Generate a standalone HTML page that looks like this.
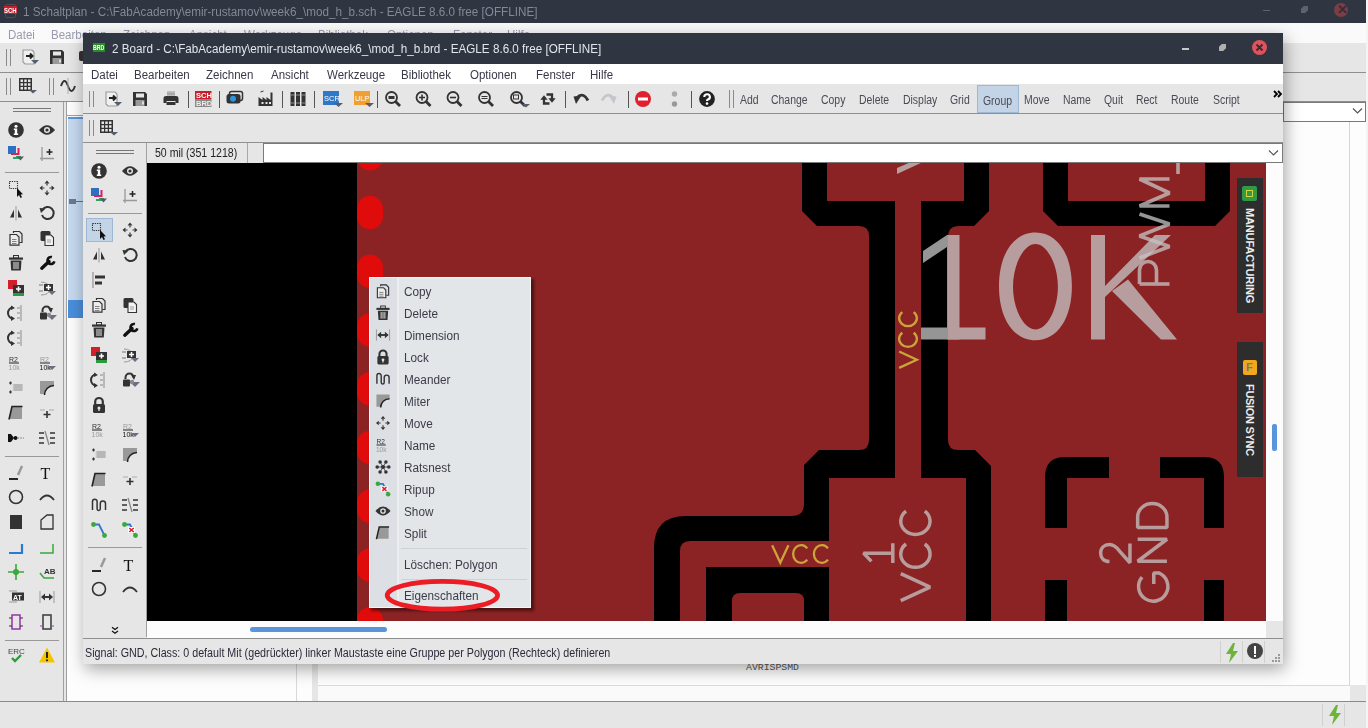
<!DOCTYPE html>
<html><head><meta charset="utf-8">
<style>
*{box-sizing:border-box;margin:0;padding:0}
html,body{width:1368px;height:728px;overflow:hidden;background:#e6e6e6;font-family:"Liberation Sans",sans-serif;font-size:12px;color:#1e1e1e;position:relative}
.a{position:absolute}
.t{position:absolute;white-space:nowrap;line-height:1;transform-origin:0 0}
.dk{background:#2f3541}
.hl{position:absolute;height:1px;background:#9a9a9a}
.vl{position:absolute;width:1px;background:#9a9a9a}
svg{position:absolute;overflow:visible}
.bm{color:#8e8e98}
.mb .t{font-size:12px;color:#39394a;transform:scaleX(.96)}
.tb .t{font-size:12px;color:#4a4a55;transform:scaleX(.87)}
.cm .t{font-size:12px;color:#3b3b48;transform:scaleX(.98)}
</style></head><body>

<!-- ============ BACKGROUND WINDOW (Schaltplan) ============ -->
<div class="a" style="left:0;top:0;width:1366px;height:728px;background:#e6e6e6"></div>
<div class="a" style="left:1366px;top:0;width:2px;height:728px;background:#f4f4f4"></div>
<div class="a dk" style="left:0;top:0;width:1366px;height:23px"></div>
<div class="a" style="left:5px;top:4px;width:11px;height:14px;border:1px solid #4a4f5a;border-radius:2px"></div><div class="a" style="left:4px;top:6px;width:13px;height:8px;background:#c8202c"></div>
<div class="t" style="left:4px;top:7px;font-size:7px;color:#fff;font-weight:bold;transform:scaleX(.85)">SCH</div>
<div class="t" style="left:23px;top:6px;font-size:12.5px;color:#828a96;transform:scaleX(.935)">1 Schaltplan - C:\FabAcademy\emir-rustamov\week6_\mod_h_b.sch - EAGLE 8.6.0 free [OFFLINE]</div>
<div class="a" style="left:1263px;top:10px;width:7px;height:1px;background:#5d626b"></div>
<div class="a" style="left:1301px;top:6px;width:7px;height:7px;background:#5d626b;clip-path:polygon(0 40%,40% 0,100% 0,100% 60%,60% 100%,0 100%)"></div>
<div class="a" style="left:1334px;top:3px;width:14px;height:14px;border-radius:50%;background:#7a3e48"></div>
<div class="t" style="left:1337px;top:3px;font-size:13px;color:#3a2b33;font-weight:bold">✕</div>

<div class="a" style="left:0;top:23px;width:1366px;height:20px;background:#fafafa"></div>
<div class="mb">
<div class="t" style="left:8px;top:29px;color:#9a9ab0">Datei</div>
<div class="t" style="left:51px;top:29px;color:#9a9ab0">Bearbeiten</div>
<div class="t" style="left:123px;top:29px;color:#9a9ab0">Zeichnen</div><div class="t" style="left:189px;top:29px;color:#9a9ab0">Ansicht</div><div class="t" style="left:244px;top:29px;color:#9a9ab0">Werkzeuge</div><div class="t" style="left:318px;top:29px;color:#9a9ab0">Bibliothek</div><div class="t" style="left:387px;top:29px;color:#9a9ab0">Optionen</div><div class="t" style="left:453px;top:29px;color:#9a9ab0">Fenster</div><div class="t" style="left:507px;top:29px;color:#9a9ab0">Hilfe</div>
</div>
<div class="a" style="left:0;top:43px;width:1366px;height:29px;background:#e6e6e6"></div>
<div class="a" style="left:79px;top:51px;width:6px;height:10px;background:#333;border-radius:2px 0 0 2px"></div>
<div class="hl" style="left:0;top:72px;width:1366px;background:#8f8f8f"></div>
<div class="hl" style="left:0;top:101px;width:1366px;background:#8f8f8f"></div>
<!-- bg left panel -->
<div class="vl" style="left:63px;top:102px;height:600px;background:#a0a0a0"></div>
<div class="vl" style="left:66px;top:102px;height:600px;background:#a0a0a0"></div>
<!-- bg canvas -->
<div class="a" style="left:67px;top:102px;width:1283px;height:583px;background:#fdfdfd"></div>
<div class="a" style="left:66px;top:115px;width:20px;height:1px;background:#a0a0a0"></div><div class="a" style="left:68px;top:117px;width:20px;height:201px;background:#c6d9ef;border-top:2px solid #5b97db"></div>
<div class="a" style="left:68px;top:300px;width:20px;height:18px;background:#4a8fdc"></div>
<div class="a" style="left:69px;top:199px;width:7px;height:5px;background:#6a7a90"></div><div class="a" style="left:76px;top:201px;width:7px;height:1px;background:#2a9a5a"></div>
<div class="vl" style="left:1349px;top:121px;height:564px;background:#d6d6dc"></div>
<div class="a" style="left:1350px;top:121px;width:16px;height:564px;background:#fdfdfd"></div>
<div class="a" style="left:1283px;top:102px;width:83px;height:20px;background:#fff;border:1px solid #7a7a7a"></div>
<svg style="left:1352px;top:107px" width="11" height="8"><path d="M1 1.5 L5.5 6 L10 1.5" fill="none" stroke="#555" stroke-width="1.2"/></svg>
<div class="a" style="left:67px;top:685px;width:251px;height:16px;background:#fdfdfd"></div>
<div class="a" style="left:318px;top:685px;width:1032px;height:16px;background:#fafafa;border-top:1px solid #dadae0"></div>
<div class="a" style="left:1350px;top:685px;width:16px;height:16px;background:#e6e6e6"></div>
<div class="vl" style="left:296px;top:663px;height:38px;background:#d8d8de"></div>
<div class="a" style="left:312px;top:663px;width:6px;height:38px;background:#e6e6e6"></div>
<div class="hl" style="left:0;top:701px;width:1366px;background:#8a8a8a"></div>
<div class="vl" style="left:1322px;top:704px;height:22px;background:#d0d0d0"></div>
<div class="vl" style="left:1344px;top:704px;height:22px;background:#d0d0d0"></div>
<svg style="left:1327px;top:705px" width="16" height="20"><path d="M9 0 L2 11 L7 11 L5 20 L14 8 L9 8 L11 0Z" fill="#6fb43a"/></svg>

<div class="t" style="left:746px;top:663px;font-family:'Liberation Mono',monospace;font-size:9.8px;color:#555">AVRISPSMD</div>
<!-- ============ BOARD WINDOW ============ -->
<div class="a" style="left:83px;top:33px;width:1200px;height:631px;background:#e6e6e6;box-shadow:2px 5px 16px rgba(0,0,0,0.36)"></div>
<div class="a dk" style="left:83px;top:33px;width:1200px;height:31px"></div>
<div class="a" style="left:93px;top:43px;width:12px;height:9px;background:#2a8a2a"></div>
<div class="t" style="left:93px;top:44px;font-size:7px;color:#fff;font-weight:bold;transform:scaleX(.75)">BRD</div>
<div class="t" style="left:112px;top:43px;font-size:12.5px;color:#e2e6ec;transform:scaleX(.934)">2 Board - C:\FabAcademy\emir-rustamov\week6_\mod_h_b.brd - EAGLE 8.6.0 free [OFFLINE]</div>
<div class="a" style="left:1182px;top:48px;width:7px;height:2px;background:#c8c8c8"></div>
<div class="a" style="left:1219px;top:44px;width:7px;height:7px;background:#b0b0b0;clip-path:polygon(0 40%,40% 0,100% 0,100% 60%,60% 100%,0 100%)"></div>
<div class="a" style="left:1252px;top:40px;width:15px;height:15px;border-radius:50%;background:#e0535c"></div>
<svg style="left:1252px;top:40px" width="15" height="15"><path d="M4.5 4.5 L10.5 10.5 M10.5 4.5 L4.5 10.5" stroke="#3a2e36" stroke-width="2"/></svg>

<div class="a" style="left:83px;top:64px;width:1200px;height:20px;background:#fff"></div>
<div class="mb">
<div class="t" style="left:91px;top:69px">Datei</div>
<div class="t" style="left:134px;top:69px">Bearbeiten</div>
<div class="t" style="left:206px;top:69px">Zeichnen</div>
<div class="t" style="left:271px;top:69px">Ansicht</div>
<div class="t" style="left:327px;top:69px">Werkzeuge</div>
<div class="t" style="left:401px;top:69px">Bibliothek</div>
<div class="t" style="left:470px;top:69px">Optionen</div>
<div class="t" style="left:536px;top:69px">Fenster</div>
<div class="t" style="left:590px;top:69px">Hilfe</div>
</div>
<div class="hl" style="left:83px;top:113px;width:1200px;background:#8f8f8f"></div>
<div class="hl" style="left:83px;top:142px;width:1200px;background:#8f8f8f"></div>
<div class="a" style="left:977px;top:85px;width:42px;height:28px;background:#c3d4e6;border:1px solid #9db8d4"></div>
<div class="tb">
<div class="t" style="left:740px;top:94px">Add</div>
<div class="t" style="left:771px;top:94px">Change</div>
<div class="t" style="left:821px;top:94px">Copy</div>
<div class="t" style="left:859px;top:94px">Delete</div>
<div class="t" style="left:903px;top:94px">Display</div>
<div class="t" style="left:950px;top:94px">Grid</div>
<div class="t" style="left:983px;top:95px">Group</div>
<div class="t" style="left:1024px;top:94px">Move</div>
<div class="t" style="left:1063px;top:94px">Name</div>
<div class="t" style="left:1104px;top:94px">Quit</div>
<div class="t" style="left:1136px;top:94px">Rect</div>
<div class="t" style="left:1171px;top:94px">Route</div>
<div class="t" style="left:1213px;top:94px">Script</div>
</div>
<svg style="left:1273px;top:90px" width="10" height="8"><path d="M1 1 L4 4 L1 7 M5 1 L8 4 L5 7" fill="none" stroke="#000" stroke-width="1.8"/></svg>

<!-- left tool panel -->
<div class="vl" style="left:146px;top:143px;height:494px;background:#a0a0a0"></div>
<!-- coord bar -->
<div class="t" style="left:155px;top:147px;font-size:12px;color:#222;transform:scaleX(.88)">50 mil (351 1218)</div>
<div class="vl" style="left:247px;top:143px;height:20px;background:#a8a8a8"></div>
<div class="a" style="left:263px;top:143px;width:1020px;height:20px;background:#fff;border:1px solid #7a7a7a"></div>
<svg style="left:1268px;top:149px" width="11" height="8"><path d="M1 1.5 L5.5 6 L10 1.5" fill="none" stroke="#555" stroke-width="1.2"/></svg>

<!-- canvas placeholder -->
<div class="a" style="left:147px;top:163px;width:1119px;height:458px;background:#8b2324"></div>
<div class="a" style="left:1266px;top:163px;width:17px;height:458px;background:#fcfcfc"></div>
<div class="a" style="left:1272px;top:424px;width:5px;height:27px;background:#5a95dc;border-radius:2px"></div>
<div class="a" style="left:147px;top:621px;width:1119px;height:17px;background:#fcfcfc"></div>
<div class="a" style="left:250px;top:627px;width:137px;height:5px;background:#5a95dc;border-radius:2.5px"></div>
<div class="a" style="left:1266px;top:621px;width:17px;height:17px;background:#e6e6e6"></div>
<div class="hl" style="left:83px;top:638px;width:1200px;background:#8f8f8f"></div>
<div class="t" style="left:85px;top:646.5px;font-size:12px;color:#2a2a3a;transform:scaleX(.893)">Signal: GND, Class: 0 default Mit (gedrückter) linker Maustaste eine Gruppe per Polygon (Rechteck) definieren</div>
<div class="vl" style="left:1220px;top:641px;height:22px;background:#d0d0d0"></div>
<div class="vl" style="left:1242px;top:641px;height:22px;background:#d0d0d0"></div>
<div class="vl" style="left:1264px;top:641px;height:22px;background:#d0d0d0"></div>
<svg style="left:1224px;top:643px" width="16" height="20"><path d="M9 0 L2 11 L7 11 L5 20 L14 8 L9 8 L11 0Z" fill="#6fb43a"/></svg>
<div class="a" style="left:1247px;top:643px;width:16px;height:16px;border-radius:50%;background:#444"></div>
<div class="a" style="left:1254px;top:646px;width:2px;height:8px;background:#fff"></div>
<div class="a" style="left:1254px;top:655px;width:2px;height:2px;background:#fff"></div>

<svg style="left:1270px;top:652px" width="12" height="12"><g fill="#9a9a9a"><rect x="8" y="2" width="2" height="2"/><rect x="5" y="5" width="2" height="2"/><rect x="8" y="5" width="2" height="2"/><rect x="2" y="8" width="2" height="2"/><rect x="5" y="8" width="2" height="2"/><rect x="8" y="8" width="2" height="2"/></g></svg>
<!--CANVAS START-->
<svg style="left:147px;top:163px" width="1119" height="458" viewBox="147 163 1119 458">
<defs><clipPath id="cc"><rect x="147" y="163" width="1119" height="458"/></clipPath></defs>
<g clip-path="url(#cc)">
<rect x="147" y="163" width="1119" height="458" fill="#8b2324"/>
<rect x="147" y="163" width="210" height="458" fill="#000"/>
<g fill="#e00b0b">
<rect x="357" y="137" width="26" height="33.5" rx="13" ry="13"/>
<rect x="357" y="195.7" width="26" height="33.5" rx="13" ry="13"/>
<rect x="357" y="254.5" width="26" height="33.5" rx="13" ry="13"/>
<rect x="357" y="313.2" width="26" height="33.5" rx="13" ry="13"/>
<rect x="357" y="372" width="26" height="33.5" rx="13" ry="13"/>
<rect x="357" y="430.7" width="26" height="33.5" rx="13" ry="13"/>
<rect x="357" y="489.5" width="26" height="33.5" rx="13" ry="13"/>
<rect x="357" y="548.2" width="26" height="33.5" rx="13" ry="13"/>
<rect x="357" y="607" width="26" height="33.5" rx="13" ry="13"/>
</g>
<path fill="#000" d="M802 160 L802 211 L817 226 L859 226 Q869 226 869 236 L869 440 Q869 450 859 450 L819 450 L804 465 L804 504 Q804 516 792 516 L686 516 Q654 516 654 548 L654 625 L1270 625 L1270 160 Z"/>
<g fill="#8b2324">
<rect x="827" y="160" width="137" height="41"/>
<rect x="1068" y="160" width="137" height="41"/>
<rect x="895" y="195" width="26" height="290"/>
<rect x="829" y="478" width="137" height="147"/>
<path d="M680 625 L680 551 Q680 541 690 541 L835 541 L835 567 L706 567 L706 625 Z"/>
<path d="M732 625 L732 601 Q732 593 740 593 L796 593 Q804 593 804 601 L804 625 Z"/>
<path d="M948 237 Q948 226 959 226 L974 226 L989 211 L989 160 L1043 160 L1043 211 L1058 226 L1215 226 L1230 211 L1230 160 L1270 160 L1270 625 L991 625 L991 466 L975 450 L958 450 Q948 450 948 440 Z"/>
</g>
<g fill="#000">
<path d="M1045 528 L1045 477 Q1045 457 1065 457 L1109 457 L1109 478 L1067 478 L1067 528 Z"/>
<path d="M1160 457 L1204 457 Q1224 457 1224 477 L1224 528 L1204 528 L1204 478 L1160 478 Z"/>
<rect x="1045" y="580" width="22" height="45"/>
<rect x="1204" y="580" width="20" height="45"/>
</g>
<g opacity="0.76" fill="#c6c4c4"><path d="M897 168 L911 162 L923 162 L897 174 Z"/></g>
<g opacity="0.76" fill="#c6c4c4">
<rect x="947" y="235" width="12.5" height="104.5"/>
<path d="M923 251 L947 235 L953 235 L953 243 L923 263 Z"/>
<rect x="921" y="327.5" width="64.5" height="12"/>
<path fill-rule="evenodd" d="M999 286.35 C999 253.98 1013.58 232.4 1035.45 232.4 C1057.32 232.4 1071.9 253.98 1071.9 286.35 C1071.9 318.72 1057.32 340.3 1035.45 340.3 C1013.58 340.3 999 318.72 999 286.35 Z M1013 286.8 C1013 264.54 1023.78 244 1035.45 244 C1047.12 244 1057.9 264.54 1057.9 286.8 C1057.9 309.06 1047.12 329.6 1035.45 329.6 C1023.78 329.6 1013 309.06 1013 286.8 Z"/>
<rect x="1091" y="235" width="14" height="104.5"/>
<path d="M1155 235 L1171 235 L1105 297 L1105 286 Z"/>
<path d="M1128 279.5 L1177 339.5 L1161 339.5 L1112 291 Z"/>
</g>
<g opacity="0.76" fill="none" stroke="#c6c4c4" stroke-width="3.6" stroke-linejoin="bevel">
<path d="M1139.5 284 L1169.5 284"/>
<path d="M1139.5 284 L1139.5 270 A8.5 8.5 0 0 1 1156.5 270 L1156.5 284"/>
<path d="M1139.5 258 L1169.5 246.5 L1139.5 236 L1169.5 224 L1139.5 214"/>
<path d="M1169.5 206 L1139.5 206 L1169.5 193 L1139.5 179 L1169.5 179"/>
<path d="M1178 163 L1178 174"/>
</g>
<g opacity="0.76" fill="none" stroke="#c6c4c4" stroke-width="3.5" stroke-linejoin="bevel">
<path transform="translate(900.75 600.6) rotate(-90)" d="M 0 0 L 13.48 29.3 L 26.96 0 M 56.6 5.27 A 13.19 14.65 0 1 0 56.6 24.03 M 89.47 5.27 A 13.19 14.65 0 1 0 89.47 24.03"/>
<path transform="translate(863.5 563.1) rotate(-90)" d="M 1.76 7.91 L 9.96 0 L 9.96 29.3 M 0 29.3 L 19.92 29.3"/>
<path transform="translate(1137.65 602.25) rotate(-90)" d="M 25.2 4.39 A 14.65 14.65 0 1 0 29.3 21.1 L 29.3 16.12 L 18.17 16.12 M 41 29.3 L 41 0 L 62.98 29.3 L 62.98 0 M 74.67 0 L 74.67 29.3 L 85.22 29.3 A 13.48 14.65 0 0 0 85.22 0 Z"/>
<path transform="translate(1100.65 562.75) rotate(-90)" d="M 1.17 8.79 C 1.17 2.93 5.27 0 9.67 0 C 14.65 0 18.17 3.52 18.17 8.79 C 18.17 13.77 14.65 16.7 11.13 19.34 L 0 29.3 L 19.34 29.3"/>
</g>
<g fill="none" stroke="#c9a53a" stroke-width="2.3">
<path transform="translate(899.15 367.85) rotate(-90)" d="M 0 0 L 8.14 17.7 L 16.28 0 M 35.07 3.19 A 7.96 8.85 0 1 0 35.07 14.51 M 55.8 3.19 A 7.96 8.85 0 1 0 55.8 14.51"/>
<path transform="translate(772.15 545.15)" d="M 0 0 L 8.14 17.7 L 16.28 0 M 35.07 3.19 A 7.96 8.85 0 1 0 35.07 14.51 M 55.8 3.19 A 7.96 8.85 0 1 0 55.8 14.51"/>
</g>
</g>
</svg>
<div class="a" style="left:1237px;top:178px;width:26px;height:135px;background:#2d2d2d"></div>
<div class="a" style="left:1242px;top:186px;width:15px;height:15px;background:#2f9a48;border-radius:2px"></div>
<div class="a" style="left:1246px;top:190px;width:7px;height:7px;border:1.5px solid #d8d23a"></div>
<div class="t" style="left:1255px;top:208px;font-size:11px;font-weight:bold;color:#ececec;letter-spacing:-0.15px;transform:rotate(90deg)">MANUFACTURING</div>
<div class="a" style="left:1237px;top:342px;width:26px;height:135px;background:#2d2d2d"></div>
<div class="a" style="left:1243px;top:360px;width:14px;height:15px;background:#f0a81e;border-radius:2px"></div>
<div class="t" style="left:1246px;top:362px;font-size:11px;font-weight:bold;color:#777">F</div>
<div class="t" style="left:1255px;top:383.5px;font-size:11px;font-weight:bold;color:#ececec;letter-spacing:-0.3px;transform:rotate(90deg)">FUSION SYNC</div>

<!--CANVAS END-->
<!--MENU START-->
<div class="a" style="left:371px;top:279px;width:163px;height:332px;background:rgba(0,0,0,0.45);filter:blur(1.5px)"></div>
<div class="a" style="left:369px;top:277px;width:162px;height:331px;background:#e3e6e9;border:1px solid #f4f5f6"></div>
<div class="a" style="left:370px;top:278px;width:27px;height:329px;background:#dcdfe3"></div>
<div class="a" style="left:397px;top:278px;width:2px;height:329px;background:#eceef0"></div>
<div class="hl" style="left:401px;top:548px;width:126px;background:#cfd1d4"></div>
<div class="hl" style="left:401px;top:579px;width:126px;background:#cfd1d4"></div>
<div class="cm">
<div class="t" style="left:404px;top:286px">Copy</div>
<div class="t" style="left:404px;top:308px">Delete</div>
<div class="t" style="left:404px;top:330px">Dimension</div>
<div class="t" style="left:404px;top:352px">Lock</div>
<div class="t" style="left:404px;top:374px">Meander</div>
<div class="t" style="left:404px;top:396px">Miter</div>
<div class="t" style="left:404px;top:418px">Move</div>
<div class="t" style="left:404px;top:440px">Name</div>
<div class="t" style="left:404px;top:462px">Ratsnest</div>
<div class="t" style="left:404px;top:484px">Ripup</div>
<div class="t" style="left:404px;top:506px">Show</div>
<div class="t" style="left:404px;top:528px">Split</div>
<div class="t" style="left:404px;top:559px">Löschen: Polygon</div>
<div class="t" style="left:404px;top:590px">Eigenschaften</div>
</div>
<svg style="left:0;top:0" width="1368" height="728">
<ellipse cx="442.4" cy="595.3" rx="55.2" ry="13.9" fill="none" stroke="#ec1c24" stroke-width="4.8"/>
</svg>

<!--MENU END-->
<!--ICONS START-->
<svg style="left:0;top:0" width="1368" height="728"><rect x="86.5" y="218.5" width="26" height="23" fill="#c3d4e6" stroke="#9db8d4" stroke-width="1"/><rect x="89" y="91" width="1" height="16" fill="#8a8a8a"/><rect x="93" y="91" width="1" height="16" fill="#8a8a8a"/><rect x="188" y="91" width="1" height="17" fill="#555"/><rect x="219" y="91" width="1" height="17" fill="#555"/><rect x="282" y="91" width="1" height="17" fill="#555"/><rect x="314" y="91" width="1" height="17" fill="#555"/><rect x="377" y="91" width="1" height="17" fill="#555"/><rect x="565" y="91" width="1" height="17" fill="#555"/><rect x="628" y="91" width="1" height="17" fill="#555"/><rect x="691" y="91" width="1" height="17" fill="#555"/><rect x="729" y="90" width="1" height="18" fill="#8a8a8a"/><rect x="733" y="90" width="1" height="18" fill="#8a8a8a"/><rect x="89" y="120" width="1" height="16" fill="#8a8a8a"/><rect x="93" y="120" width="1" height="16" fill="#8a8a8a"/><rect x="6" y="49" width="1" height="17" fill="#8a8a8a"/><rect x="10" y="49" width="1" height="17" fill="#8a8a8a"/><rect x="6" y="78" width="1" height="17" fill="#8a8a8a"/><rect x="10" y="78" width="1" height="17" fill="#8a8a8a"/><rect x="49" y="78" width="1" height="17" fill="#8a8a8a"/><rect x="53" y="78" width="1" height="17" fill="#8a8a8a"/><rect x="96" y="150" width="38" height="1" fill="#777"/><rect x="96" y="153" width="38" height="1" fill="#777"/><rect x="13" y="108" width="38" height="1" fill="#777"/><rect x="13" y="111" width="38" height="1" fill="#777"/><rect x="88" y="213" width="54" height="1" fill="#999"/><rect x="88" y="547" width="54" height="1" fill="#999"/><rect x="5" y="172" width="54" height="1" fill="#999"/><rect x="5" y="456" width="54" height="1" fill="#999"/><rect x="5" y="640" width="54" height="1" fill="#999"/>
<g transform="translate(91.0 163.0)"><circle cx="8" cy="8" r="7.8" fill="#333"/><circle cx="8" cy="4.2" r="1.5" fill="#fff"/><path d="M5.8 6.6 H9.2 V11.6 H10.2 V13 H5.8 V11.6 H6.8 V8 H5.8Z" fill="#fff"/></g>
<g transform="translate(122.0 163.0)"><path d="M0 8 Q8 -1.5 16 8 Q8 17.5 0 8Z" fill="#333"/><circle cx="8" cy="8" r="3" fill="#e6e6e6"/><circle cx="8" cy="8" r="1.6" fill="#333"/></g>
<g transform="translate(91.0 188.0)"><rect x="0" y="0" width="8" height="8" fill="#2f6fc2"/><path d="M9.5 2 H11.5 V9 H3 V7 H9.5Z" fill="#d92060"/><path d="M8 10 H13 V13 H5 V11 H8Z" fill="#2aa55a"/><path d="M9 10.5 H16 L12.5 14.5Z" fill="#555a66"/></g>
<g transform="translate(122.0 188.0)"><path d="M3 1 V15 M1 12.5 H15" stroke="#999" stroke-width="1.3" fill="none"/><path d="M10.5 3 V9 M7.5 6 H13.5" stroke="#222" stroke-width="1.5"/></g>
<g transform="translate(91.0 222.0)"><rect x="1.5" y="1.5" width="8" height="7" fill="none" stroke="#333" stroke-width="1.1" stroke-dasharray="1.3 1"/><path d="M9 8 L9 17 L11 15 L12.5 18 L14 17.3 L12.6 14.5 L15 14.2Z" fill="#111"/></g>
<g transform="translate(122.0 222.0)"><path d="M8 0.5 L10.5 3.5 H5.5Z M8 15.5 L10.5 12.5 H5.5Z M0.5 8 L3.5 5.5 V10.5Z M15.5 8 L12.5 5.5 V10.5Z" fill="#333"/><path d="M8 3.5 V5.5 M8 10.5 V12.5 M3.5 8 H5.5 M10.5 8 H12.5" stroke="#333" stroke-width="1.2"/></g>
<g transform="translate(91.0 247.0)"><path d="M8 1 V15.5" stroke="#aaa" stroke-width="1.3"/><path d="M6 4.5 L2 12.5 H6Z" fill="#333"/><path d="M10 4.5 L14 12.5 H10Z" fill="#333"/></g>
<g transform="translate(122.0 247.0)"><path d="M3.5 5 A6 6 0 1 1 3 10" fill="none" stroke="#333" stroke-width="2"/><path d="M0.5 3 L6.5 3.5 L2 8Z" fill="#333"/></g>
<g transform="translate(91.0 272.0)"><path d="M2 0 V16" stroke="#999" stroke-width="1.3"/><rect x="4" y="3.5" width="10" height="3" fill="#333"/><rect x="4" y="9.5" width="7" height="3" fill="#333"/></g>
<g transform="translate(91.0 297.0)"><path d="M5.5 3 V1.5 H11.5 L14 4 V12.5 H11.5" fill="none" stroke="#333" stroke-width="1.2"/><path d="M2 4.5 H8.5 L11 7 V15.2 H2Z" fill="#ececec" stroke="#333" stroke-width="1.2"/><path d="M4 9.5 H8.5 M4 11.5 H8.5 M4 13.5 H8.5" stroke="#777" stroke-width="0.9"/></g>
<g transform="translate(122.0 297.0)"><rect x="1.5" y="1" width="10" height="10" rx="1.5" fill="#333"/><path d="M6 5 H12 L14.5 7.5 V15.5 H6Z" fill="#f2f2f2" stroke="#333" stroke-width="1.1"/><path d="M8 10 H12 M8 12 H12" stroke="#888" stroke-width="0.8"/></g>
<g transform="translate(91.0 322.0)"><rect x="1" y="2.5" width="14" height="2.2" fill="#333"/><rect x="5.5" y="0.5" width="5" height="2.5" fill="none" stroke="#333" stroke-width="1"/><path d="M2.5 5.5 H13.5 L12.8 15.5 H3.2Z" fill="#333"/><path d="M6 7 V14 M8 7 V14 M10 7 V14" stroke="#e6e6e6" stroke-width="1"/></g>
<g transform="translate(122.0 322.0)"><path d="M2.8 13.2 L10 6.5" stroke="#111" stroke-width="3.4" stroke-linecap="round"/><path d="M13.24 0.86 A4.8 4.8 0 1 0 16.64 6.74 L14.1 6.07 A2.2 2.2 0 1 1 12.57 3.37 Z" fill="#111"/></g>
<g transform="translate(91.0 347.0)"><rect x="0" y="0" width="9" height="9" fill="#d21f2b"/><rect x="5" y="5" width="11" height="8" fill="#333"/><rect x="5" y="13" width="11" height="3" fill="#2a9a3e"/><path d="M10.5 6.5 V11.5 M8 9 H13" stroke="#fff" stroke-width="1.6"/></g>
<g transform="translate(122.0 347.0)"><path d="M2 2 Q10 2 11 9 Q10 15 2 15" fill="none" stroke="#999" stroke-width="1"/><path d="M0 5 H4 M0 11 H4" stroke="#777" stroke-width="1"/><rect x="5" y="4" width="9" height="7" fill="#333"/><path d="M9.5 5 V10 M7 7.5 H12" stroke="#fff" stroke-width="1.5"/><path d="M9 11 H17 L13 15Z" fill="#6a7080"/></g>
<g transform="translate(91.0 372.0)"><path d="M5 2.5 A5 5.5 0 0 0 5 13.5" fill="none" stroke="#333" stroke-width="2"/><path d="M3 0.5 L7 3 L3 5Z M3 11 L7 13.5 L3 16Z" fill="#333"/><path d="M13 0 V16" stroke="#aaa" stroke-width="1.5"/><path d="M9 3 H12 M9 8 H12 M9 13 H12" stroke="#888" stroke-width="1"/></g>
<g transform="translate(122.0 372.0)"><path d="M3.5 7 V5.5 A4 4 0 0 1 11.5 5.5" fill="none" stroke="#333" stroke-width="2"/><path d="M9 3 L14 3 L12 8Z" fill="#333"/><rect x="1" y="7.5" width="7" height="7" rx="1" fill="#333"/><path d="M8 10 H18 L13 15Z" fill="#6a7080"/><circle cx="10" cy="10" r="2.2" fill="#888"/></g>
<g transform="translate(91.0 397.0)"><path d="M4.2 7 V4.8 A3.8 3.8 0 0 1 11.8 4.8 V7" fill="none" stroke="#333" stroke-width="2.2"/><rect x="2" y="7" width="12" height="9" rx="1.5" fill="#333"/><circle cx="8" cy="11" r="1.5" fill="#e6e6e6"/><rect x="7.4" y="11" width="1.2" height="3" fill="#e6e6e6"/></g>
<g transform="translate(91.0 422.0)"><text x="1" y="6.5" font-size="7" font-family="Liberation Sans" fill="#333">R2</text><path d="M1 8 H11" stroke="#444" stroke-width="1.2"/><text x="0.5" y="15" font-size="7" font-family="Liberation Sans" fill="#999">10k</text></g>
<g transform="translate(122.0 422.0)"><text x="1" y="6.5" font-size="7" font-family="Liberation Sans" fill="#999">R2</text><path d="M1 8 H11" stroke="#444" stroke-width="1.2"/><text x="0.5" y="15" font-size="7" font-family="Liberation Sans" fill="#111">10k</text><path d="M9 11 H17 L13 15Z" fill="#6a7080"/></g>
<g transform="translate(91.0 447.0)"><path d="M1 3 H4 M2.5 1.5 V4.5 M1 12 H4 M2.5 10.5 V13.5" stroke="#333" stroke-width="1.2"/><rect x="5.5" y="4" width="9" height="7" fill="#aaa"/><path d="M5 4 V11 M7 4 V11 M9 4 V11 M11 4 V11 M13 4 V11" stroke="#ccc" stroke-width="0.8"/></g>
<g transform="translate(122.0 447.0)"><path d="M1 1 H15 V5 A9 9 0 0 0 6 14 H1Z" fill="#999"/><path d="M15 5.5 A9.5 9.5 0 0 0 5.5 15" fill="none" stroke="#222" stroke-width="1.6"/></g>
<g transform="translate(91.0 472.0)"><path d="M4 2 H14 V14 H1Z" fill="#999"/><path d="M1 14.5 L4 1.5 L14.5 1.5" fill="none" stroke="#222" stroke-width="1.6"/></g>
<g transform="translate(122.0 472.0)"><path d="M1 5 H6 M10 5 H15" stroke="#aaa" stroke-width="1"/><path d="M8 6 V13 M4.5 9.5 H11.5" stroke="#333" stroke-width="1.6"/></g>
<g transform="translate(91.0 497.0)"><path d="M1.5 13 V6.5 A2.6 2.6 0 0 1 6.7 6.5 V11.8 A1.6 1.6 0 0 0 9.9 11.8 V4.5 A2.3 2.3 0 0 1 14.5 4.5 V13" fill="none" stroke="#333" stroke-width="1.5" transform="translate(16 0) scale(-1 1)"/></g>
<g transform="translate(122.0 497.0)"><path d="M0 3 H5 M0 8 H5 M0 13 H5 M11 3 H16 M11 8 H16 M11 13 H16" stroke="#333" stroke-width="1.4"/><path d="M6 1 L10 15" stroke="#888" stroke-width="1.3"/></g>
<g transform="translate(91.0 522.0)"><path d="M2.5 2.5 H8 L13.5 13.5" fill="none" stroke="#2f78d0" stroke-width="1.8"/><circle cx="2.5" cy="2.5" r="2.4" fill="#3aa83a"/><circle cx="13.5" cy="13.5" r="2.4" fill="#3aa83a"/></g>
<g transform="translate(122.0 522.0)"><path d="M2.5 2.5 H8 L13.5 13.5" fill="none" stroke="#2f78d0" stroke-width="1.8"/><circle cx="2.5" cy="2.5" r="2.4" fill="#3aa83a"/><circle cx="13.5" cy="13.5" r="2.4" fill="#3aa83a"/><rect x="6" y="5" width="7" height="6" fill="#fff"/><path d="M7.3 6 L11.7 10 M11.7 6 L7.3 10" stroke="#e0202a" stroke-width="1.6"/></g>
<g transform="translate(91.0 556.0)"><path d="M1 15 H10" stroke="#111" stroke-width="1.8"/><path d="M10 11 L14 2" stroke="#999" stroke-width="2.5"/></g>
<g transform="translate(122.0 556.0)"><text x="1.5" y="15" font-size="16" font-family="Liberation Serif" fill="#111">T</text></g>
<g transform="translate(91.0 581.0)"><circle cx="8" cy="8" r="6.5" fill="none" stroke="#333" stroke-width="1.6"/></g>
<g transform="translate(122.0 581.0)"><path d="M1 11 Q8 2 15 11" fill="none" stroke="#333" stroke-width="1.8"/></g>
<g transform="translate(109.0 625.0) scale(0.7500)"><path d="M4 3 L8 6 L12 3 M4 8 L8 11 L12 8" fill="none" stroke="#111" stroke-width="1.6"/></g>
<g transform="translate(8.0 122.0)"><circle cx="8" cy="8" r="7.8" fill="#333"/><circle cx="8" cy="4.2" r="1.5" fill="#fff"/><path d="M5.8 6.6 H9.2 V11.6 H10.2 V13 H5.8 V11.6 H6.8 V8 H5.8Z" fill="#fff"/></g>
<g transform="translate(39.0 122.0)"><path d="M0 8 Q8 -1.5 16 8 Q8 17.5 0 8Z" fill="#333"/><circle cx="8" cy="8" r="3" fill="#e6e6e6"/><circle cx="8" cy="8" r="1.6" fill="#333"/></g>
<g transform="translate(8.0 146.0)"><rect x="0" y="0" width="8" height="8" fill="#2f6fc2"/><path d="M9.5 2 H11.5 V9 H3 V7 H9.5Z" fill="#d92060"/><path d="M8 10 H13 V13 H5 V11 H8Z" fill="#2aa55a"/><path d="M9 10.5 H16 L12.5 14.5Z" fill="#555a66"/></g>
<g transform="translate(39.0 146.0)"><path d="M3 1 V15 M1 12.5 H15" stroke="#999" stroke-width="1.3" fill="none"/><path d="M10.5 3 V9 M7.5 6 H13.5" stroke="#222" stroke-width="1.5"/></g>
<g transform="translate(8.0 180.0)"><rect x="1.5" y="1.5" width="8" height="7" fill="none" stroke="#333" stroke-width="1.1" stroke-dasharray="1.3 1"/><path d="M9 8 L9 17 L11 15 L12.5 18 L14 17.3 L12.6 14.5 L15 14.2Z" fill="#111"/></g>
<g transform="translate(39.0 180.0)"><path d="M8 0.5 L10.5 3.5 H5.5Z M8 15.5 L10.5 12.5 H5.5Z M0.5 8 L3.5 5.5 V10.5Z M15.5 8 L12.5 5.5 V10.5Z" fill="#333"/><path d="M8 3.5 V5.5 M8 10.5 V12.5 M3.5 8 H5.5 M10.5 8 H12.5" stroke="#333" stroke-width="1.2"/></g>
<g transform="translate(8.0 205.0)"><path d="M8 1 V15.5" stroke="#aaa" stroke-width="1.3"/><path d="M6 4.5 L2 12.5 H6Z" fill="#333"/><path d="M10 4.5 L14 12.5 H10Z" fill="#333"/></g>
<g transform="translate(39.0 205.0)"><path d="M3.5 5 A6 6 0 1 1 3 10" fill="none" stroke="#333" stroke-width="2"/><path d="M0.5 3 L6.5 3.5 L2 8Z" fill="#333"/></g>
<g transform="translate(8.0 230.0)"><path d="M5.5 3 V1.5 H11.5 L14 4 V12.5 H11.5" fill="none" stroke="#333" stroke-width="1.2"/><path d="M2 4.5 H8.5 L11 7 V15.2 H2Z" fill="#ececec" stroke="#333" stroke-width="1.2"/><path d="M4 9.5 H8.5 M4 11.5 H8.5 M4 13.5 H8.5" stroke="#777" stroke-width="0.9"/></g>
<g transform="translate(39.0 230.0)"><rect x="1.5" y="1" width="10" height="10" rx="1.5" fill="#333"/><path d="M6 5 H12 L14.5 7.5 V15.5 H6Z" fill="#f2f2f2" stroke="#333" stroke-width="1.1"/><path d="M8 10 H12 M8 12 H12" stroke="#888" stroke-width="0.8"/></g>
<g transform="translate(8.0 255.0)"><rect x="1" y="2.5" width="14" height="2.2" fill="#333"/><rect x="5.5" y="0.5" width="5" height="2.5" fill="none" stroke="#333" stroke-width="1"/><path d="M2.5 5.5 H13.5 L12.8 15.5 H3.2Z" fill="#333"/><path d="M6 7 V14 M8 7 V14 M10 7 V14" stroke="#e6e6e6" stroke-width="1"/></g>
<g transform="translate(39.0 255.0)"><path d="M2.8 13.2 L10 6.5" stroke="#111" stroke-width="3.4" stroke-linecap="round"/><path d="M13.24 0.86 A4.8 4.8 0 1 0 16.64 6.74 L14.1 6.07 A2.2 2.2 0 1 1 12.57 3.37 Z" fill="#111"/></g>
<g transform="translate(8.0 280.0)"><rect x="0" y="0" width="9" height="9" fill="#d21f2b"/><rect x="5" y="5" width="11" height="8" fill="#333"/><rect x="5" y="13" width="11" height="3" fill="#2a9a3e"/><path d="M10.5 6.5 V11.5 M8 9 H13" stroke="#fff" stroke-width="1.6"/></g>
<g transform="translate(39.0 280.0)"><path d="M2 2 Q10 2 11 9 Q10 15 2 15" fill="none" stroke="#999" stroke-width="1"/><path d="M0 5 H4 M0 11 H4" stroke="#777" stroke-width="1"/><rect x="5" y="4" width="9" height="7" fill="#333"/><path d="M9.5 5 V10 M7 7.5 H12" stroke="#fff" stroke-width="1.5"/><path d="M9 11 H17 L13 15Z" fill="#6a7080"/></g>
<g transform="translate(8.0 305.0)"><path d="M5 2.5 A5 5.5 0 0 0 5 13.5" fill="none" stroke="#333" stroke-width="2"/><path d="M3 0.5 L7 3 L3 5Z M3 11 L7 13.5 L3 16Z" fill="#333"/><path d="M13 0 V16" stroke="#aaa" stroke-width="1.5"/><path d="M9 3 H12 M9 8 H12 M9 13 H12" stroke="#888" stroke-width="1"/></g>
<g transform="translate(39.0 305.0)"><path d="M3.5 7 V5.5 A4 4 0 0 1 11.5 5.5" fill="none" stroke="#333" stroke-width="2"/><path d="M9 3 L14 3 L12 8Z" fill="#333"/><rect x="1" y="7.5" width="7" height="7" rx="1" fill="#333"/><path d="M8 10 H18 L13 15Z" fill="#6a7080"/><circle cx="10" cy="10" r="2.2" fill="#888"/></g>
<g transform="translate(8.0 330.0)"><path d="M5 2.5 A5 5.5 0 0 0 5 13.5" fill="none" stroke="#333" stroke-width="2"/><path d="M3 0.5 L7 3 L3 5Z M3 11 L7 13.5 L3 16Z" fill="#333"/><path d="M13 0 V16" stroke="#aaa" stroke-width="1.5"/><path d="M9 3 H12 M9 8 H12 M9 13 H12" stroke="#888" stroke-width="1"/></g>
<g transform="translate(8.0 355.0)"><text x="1" y="6.5" font-size="7" font-family="Liberation Sans" fill="#333">R2</text><path d="M1 8 H11" stroke="#444" stroke-width="1.2"/><text x="0.5" y="15" font-size="7" font-family="Liberation Sans" fill="#999">10k</text></g>
<g transform="translate(39.0 355.0)"><text x="1" y="6.5" font-size="7" font-family="Liberation Sans" fill="#999">R2</text><path d="M1 8 H11" stroke="#444" stroke-width="1.2"/><text x="0.5" y="15" font-size="7" font-family="Liberation Sans" fill="#111">10k</text><path d="M9 11 H17 L13 15Z" fill="#6a7080"/></g>
<g transform="translate(8.0 380.0)"><path d="M1 3 H4 M2.5 1.5 V4.5 M1 12 H4 M2.5 10.5 V13.5" stroke="#333" stroke-width="1.2"/><rect x="5.5" y="4" width="9" height="7" fill="#aaa"/><path d="M5 4 V11 M7 4 V11 M9 4 V11 M11 4 V11 M13 4 V11" stroke="#ccc" stroke-width="0.8"/></g>
<g transform="translate(39.0 380.0)"><path d="M1 1 H15 V5 A9 9 0 0 0 6 14 H1Z" fill="#999"/><path d="M15 5.5 A9.5 9.5 0 0 0 5.5 15" fill="none" stroke="#222" stroke-width="1.6"/></g>
<g transform="translate(8.0 405.0)"><path d="M4 2 H14 V14 H1Z" fill="#999"/><path d="M1 14.5 L4 1.5 L14.5 1.5" fill="none" stroke="#222" stroke-width="1.6"/></g>
<g transform="translate(39.0 405.0)"><path d="M1 5 H6 M10 5 H15" stroke="#aaa" stroke-width="1"/><path d="M8 6 V13 M4.5 9.5 H11.5" stroke="#333" stroke-width="1.6"/></g>
<g transform="translate(8.0 430.0)"><path d="M0 4 H3 L6 8 L3 12 H0Z" fill="#111"/><path d="M7 8 H16" stroke="#999" stroke-width="1.6" stroke-dasharray="1.5 1.2"/><circle cx="7.5" cy="8" r="2" fill="#111"/></g>
<g transform="translate(39.0 430.0)"><path d="M0 3 H5 M0 8 H5 M0 13 H5 M11 3 H16 M11 8 H16 M11 13 H16" stroke="#333" stroke-width="1.4"/><path d="M6 1 L10 15" stroke="#888" stroke-width="1.3"/></g>
<g transform="translate(8.0 464.0)"><path d="M1 15 H10" stroke="#111" stroke-width="1.8"/><path d="M10 11 L14 2" stroke="#999" stroke-width="2.5"/></g>
<g transform="translate(39.0 464.0)"><text x="1.5" y="15" font-size="16" font-family="Liberation Serif" fill="#111">T</text></g>
<g transform="translate(8.0 489.0)"><circle cx="8" cy="8" r="6.5" fill="none" stroke="#333" stroke-width="1.6"/></g>
<g transform="translate(39.0 489.0)"><path d="M1 11 Q8 2 15 11" fill="none" stroke="#333" stroke-width="1.8"/></g>
<g transform="translate(8.0 514.0)"><rect x="2" y="1" width="12" height="14" fill="#333"/></g>
<g transform="translate(39.0 514.0)"><path d="M2 15 V6 L8 1 H14 V15Z" fill="none" stroke="#333" stroke-width="1.3"/></g>
<g transform="translate(8.0 539.0)"><path d="M1 14 H14 V5" fill="none" stroke="#2f78d0" stroke-width="2.2"/></g>
<g transform="translate(39.0 539.0)"><path d="M1 14 H14 V5" fill="none" stroke="#3aa83a" stroke-width="1.5"/></g>
<g transform="translate(8.0 564.0)"><path d="M8 0 V16 M0 8 H16" stroke="#3aa83a" stroke-width="1.6"/><circle cx="8" cy="8" r="3" fill="#3aa83a"/></g>
<g transform="translate(39.0 564.0)"><path d="M1 9 L5 14 H15" fill="none" stroke="#3aa83a" stroke-width="1.6"/><text x="5" y="10" font-size="8" font-family="Liberation Sans" font-weight="bold" fill="#333">AB</text></g>
<g transform="translate(8.0 589.0)"><path d="M1 2 H9 M1 13 H9" stroke="#999" stroke-width="1"/><rect x="4" y="3.5" width="12" height="8" fill="#333"/><text x="5" y="10.5" font-size="7" font-family="Liberation Sans" font-weight="bold" fill="#fff">AT</text></g>
<g transform="translate(39.0 589.0)"><path d="M1 2 V14 M15 2 V14" stroke="#999" stroke-width="1"/><path d="M3 8 H13" stroke="#333" stroke-width="2"/><path d="M2 8 L6 4.5 V11.5Z M14 8 L10 4.5 V11.5Z" fill="#333"/></g>
<g transform="translate(8.0 614.0)"><rect x="4" y="1" width="8" height="14" fill="none" stroke="#9b3fb0" stroke-width="1.6"/><path d="M1 4 H4 M12 4 H15 M1 12 H4 M12 12 H15" stroke="#333" stroke-width="1.2"/></g>
<g transform="translate(39.0 614.0)"><rect x="4" y="1" width="8" height="14" fill="none" stroke="#444" stroke-width="1.6"/><path d="M1 12 H4 M12 12 H15" stroke="#9b3fb0" stroke-width="1.2"/></g>
<g transform="translate(8.0 647.0)"><text x="0" y="7" font-size="8" font-family="Liberation Sans" fill="#444">ERC</text><path d="M4 11 L7 14 L13 8" fill="none" stroke="#2f9a3a" stroke-width="2.4"/></g>
<g transform="translate(39.0 647.0)"><path d="M8 0.5 L16 15.5 H0Z" fill="#f5c400"/><path d="M8 5 V11" stroke="#222" stroke-width="2"/><circle cx="8" cy="13.3" r="1.1" fill="#222"/></g>
<g transform="translate(375.5 283.5) scale(0.9375)"><path d="M5.5 3 V1.5 H11.5 L14 4 V12.5 H11.5" fill="none" stroke="#333" stroke-width="1.2"/><path d="M2 4.5 H8.5 L11 7 V15.2 H2Z" fill="#ececec" stroke="#333" stroke-width="1.2"/><path d="M4 9.5 H8.5 M4 11.5 H8.5 M4 13.5 H8.5" stroke="#777" stroke-width="0.9"/></g>
<g transform="translate(375.5 305.5) scale(0.9375)"><rect x="1" y="2.5" width="14" height="2.2" fill="#333"/><rect x="5.5" y="0.5" width="5" height="2.5" fill="none" stroke="#333" stroke-width="1"/><path d="M2.5 5.5 H13.5 L12.8 15.5 H3.2Z" fill="#333"/><path d="M6 7 V14 M8 7 V14 M10 7 V14" stroke="#e6e6e6" stroke-width="1"/></g>
<g transform="translate(375.5 327.5) scale(0.9375)"><path d="M1 2 V14 M15 2 V14" stroke="#999" stroke-width="1"/><path d="M3 8 H13" stroke="#333" stroke-width="2"/><path d="M2 8 L6 4.5 V11.5Z M14 8 L10 4.5 V11.5Z" fill="#333"/></g>
<g transform="translate(375.5 349.5) scale(0.9375)"><path d="M4.2 7 V4.8 A3.8 3.8 0 0 1 11.8 4.8 V7" fill="none" stroke="#333" stroke-width="2.2"/><rect x="2" y="7" width="12" height="9" rx="1.5" fill="#333"/><circle cx="8" cy="11" r="1.5" fill="#e6e6e6"/><rect x="7.4" y="11" width="1.2" height="3" fill="#e6e6e6"/></g>
<g transform="translate(375.5 371.5) scale(0.9375)"><path d="M1.5 13 V6.5 A2.6 2.6 0 0 1 6.7 6.5 V11.8 A1.6 1.6 0 0 0 9.9 11.8 V4.5 A2.3 2.3 0 0 1 14.5 4.5 V13" fill="none" stroke="#333" stroke-width="1.5" transform="translate(16 0) scale(-1 1)"/></g>
<g transform="translate(375.5 393.5) scale(0.9375)"><path d="M1 1 H15 V5 A9 9 0 0 0 6 14 H1Z" fill="#999"/><path d="M15 5.5 A9.5 9.5 0 0 0 5.5 15" fill="none" stroke="#222" stroke-width="1.6"/></g>
<g transform="translate(375.5 415.5) scale(0.9375)"><path d="M8 0.5 L10.5 3.5 H5.5Z M8 15.5 L10.5 12.5 H5.5Z M0.5 8 L3.5 5.5 V10.5Z M15.5 8 L12.5 5.5 V10.5Z" fill="#333"/><path d="M8 3.5 V5.5 M8 10.5 V12.5 M3.5 8 H5.5 M10.5 8 H12.5" stroke="#333" stroke-width="1.2"/></g>
<g transform="translate(375.5 437.5) scale(0.9375)"><text x="1" y="6.5" font-size="7" font-family="Liberation Sans" fill="#333">R2</text><path d="M1 8 H11" stroke="#444" stroke-width="1.2"/><text x="0.5" y="15" font-size="7" font-family="Liberation Sans" fill="#999">10k</text></g>
<g transform="translate(375.5 459.5) scale(0.9375)"><path d="M8 8 L4.9 2.6 M8 8 L11.1 2.6 M8 8 L14.2 8.0 M8 8 L11.1 13.4 M8 8 L4.9 13.4 M8 8 L1.8 8.0 " stroke="#555" stroke-width="1"/><circle cx="4.9" cy="2.6" r="1.9" fill="#333"/><circle cx="11.1" cy="2.6" r="1.9" fill="#333"/><circle cx="14.2" cy="8.0" r="1.9" fill="#333"/><circle cx="11.1" cy="13.4" r="1.9" fill="#333"/><circle cx="4.9" cy="13.4" r="1.9" fill="#333"/><circle cx="1.8" cy="8.0" r="1.9" fill="#333"/><circle cx="8" cy="8" r="2.2" fill="#333"/></g>
<g transform="translate(375.5 481.5) scale(0.9375)"><path d="M2.5 2.5 H8 L13.5 13.5" fill="none" stroke="#2f78d0" stroke-width="1.8"/><circle cx="2.5" cy="2.5" r="2.4" fill="#3aa83a"/><circle cx="13.5" cy="13.5" r="2.4" fill="#3aa83a"/><rect x="6" y="5" width="7" height="6" fill="#fff"/><path d="M7.3 6 L11.7 10 M11.7 6 L7.3 10" stroke="#e0202a" stroke-width="1.6"/></g>
<g transform="translate(375.5 503.5) scale(0.9375)"><path d="M0 8 Q8 -1.5 16 8 Q8 17.5 0 8Z" fill="#333"/><circle cx="8" cy="8" r="3" fill="#e6e6e6"/><circle cx="8" cy="8" r="1.6" fill="#333"/></g>
<g transform="translate(375.5 525.5) scale(0.9375)"><path d="M4 2 H14 V14 H1Z" fill="#999"/><path d="M1 14.5 L4 1.5 L14.5 1.5" fill="none" stroke="#222" stroke-width="1.6"/></g>
<g transform="translate(104.0 91.0)"><path d="M2 1 H11 L13 3 V15 H4 L2 13Z" fill="#f0f0f0" stroke="#999" stroke-width="1.1"/><path d="M5 7 H11 M9 4.5 L11.5 7 L9 9.5" fill="none" stroke="#222" stroke-width="2"/><path d="M10 11 H18 L14 15Z" fill="#555e6e"/></g>
<g transform="translate(132.0 91.0)"><path d="M1 1 H13 L15 3 V15 H1Z" fill="#333"/><rect x="4" y="2.5" width="8" height="4" fill="#e6e6e6"/><rect x="3.5" y="9" width="9" height="6" fill="#999"/><rect x="10" y="10.5" width="2" height="3" fill="#ddd"/></g>
<g transform="translate(163.0 91.0)"><rect x="4" y="0.5" width="8" height="4" fill="#999"/><path d="M4 1.5 H12 M4 3 H12" stroke="#ccc" stroke-width="0.6"/><path d="M0.5 7 Q0.5 5 3 5 H13 Q15.5 5 15.5 7 V12 H12.5 V10 H3.5 V12 H0.5Z" fill="#333"/><rect x="3.5" y="11" width="9" height="3" fill="#333"/></g>
<g transform="translate(195.0 91.0)"><rect x="0" y="0" width="16.5" height="8" fill="#c8202a"/><rect x="0" y="8" width="16.5" height="8" fill="#8a8a8a"/><text x="1" y="7" font-size="7.5" font-weight="bold" font-family="Liberation Sans" fill="#fff">SCH</text><text x="1" y="15" font-size="7.5" font-weight="bold" font-family="Liberation Sans" fill="#eee">BRD</text></g>
<g transform="translate(226.5 91.0)"><rect x="3" y="0.5" width="13" height="9" rx="2" fill="none" stroke="#333" stroke-width="1.5"/><rect x="0" y="3" width="14" height="9.5" rx="2.5" fill="#333"/><circle cx="6.5" cy="7.7" r="3" fill="#2d95de"/></g>
<g transform="translate(257.5 91.0)"><path d="M1 15 V6 L5 9 V6 L9 9 V6 L13 9 V1.5 H15 V15Z" fill="#333"/><path d="M3 1 L6 0" stroke="#333"/><rect x="4" y="11" width="2" height="2" fill="#e6e6e6"/><rect x="8" y="11" width="2" height="2" fill="#e6e6e6"/><rect x="11.5" y="11" width="2" height="2" fill="#e6e6e6"/></g>
<g transform="translate(290.0 91.0)"><rect x="0.5" y="1" width="4" height="14" fill="#333"/><rect x="6" y="1" width="4" height="14" fill="#333"/><rect x="11.5" y="1" width="4" height="14" fill="#333"/><path d="M0.5 4 H4.5 M6 4 H10 M11.5 4 H15.5 M0.5 12 H4.5 M6 12 H10 M11.5 12 H15.5" stroke="#aaa" stroke-width="0.8"/></g>
<g transform="translate(323.0 91.0)"><rect x="0" y="0" width="16" height="14" fill="#2f78c8"/><text x="1" y="10" font-size="7.5" font-family="Liberation Sans" fill="#fff">SCR</text><path d="M11 12 H20 L15.5 16Z" fill="#555e6e"/></g>
<g transform="translate(354.0 91.0)"><rect x="0" y="0" width="16" height="14" fill="#f0a030"/><text x="1" y="10" font-size="7.5" font-family="Liberation Sans" fill="#fff">ULP</text><path d="M11 12 H20 L15.5 16Z" fill="#555e6e"/></g>
<g transform="translate(385.0 91.0)"><circle cx="6.5" cy="6.5" r="5.5" fill="none" stroke="#333" stroke-width="1.8"/><path d="M10.5 10.5 L15 15" stroke="#333" stroke-width="2.8"/><rect x="3.5" y="5" width="6" height="3" fill="#333"/></g>
<g transform="translate(415.5 91.0)"><circle cx="6.5" cy="6.5" r="5.5" fill="none" stroke="#333" stroke-width="1.8"/><path d="M10.5 10.5 L15 15" stroke="#333" stroke-width="2.8"/><path d="M6.5 3.5 V9.5 M3.5 6.5 H9.5" stroke="#333" stroke-width="1.6"/></g>
<g transform="translate(446.5 91.0)"><circle cx="6.5" cy="6.5" r="5.5" fill="none" stroke="#333" stroke-width="1.8"/><path d="M10.5 10.5 L15 15" stroke="#333" stroke-width="2.8"/><path d="M3.5 6.5 H9.5" stroke="#333" stroke-width="1.6"/></g>
<g transform="translate(478.0 91.0)"><circle cx="6.5" cy="6.5" r="5.5" fill="none" stroke="#333" stroke-width="1.8"/><path d="M10.5 10.5 L15 15" stroke="#333" stroke-width="2.8"/><path d="M3.5 5.5 H9.5 M3.5 7.5 H9.5" stroke="#333" stroke-width="1.2"/></g>
<g transform="translate(510.0 91.0)"><circle cx="6.5" cy="6.5" r="5.5" fill="none" stroke="#333" stroke-width="1.8"/><path d="M10.5 10.5 L15 15" stroke="#333" stroke-width="2.8"/><rect x="3.5" y="4" width="5" height="4" fill="none" stroke="#333" stroke-width="1"/><path d="M12 13 H20 L16 16.5Z" fill="#555e6e"/></g>
<g transform="translate(540.0 91.0)"><path d="M4 8 V12.5 H9.5 M6.5 3.5 H12 V8" fill="none" stroke="#333" stroke-width="2.3"/><path d="M0.3 8.8 L4 4.3 L7.7 8.8Z M8.3 7.2 L12 11.7 L15.7 7.2Z" fill="#333"/></g>
<g transform="translate(572.0 91.0)"><path d="M16 9.5 Q12 1.5 6 5.5" fill="none" stroke="#333" stroke-width="2.8"/><path d="M1.5 5.5 L9.5 4.5 L4 13Z" fill="#333"/></g>
<g transform="translate(602.0 91.0)"><path d="M0 9.5 Q4 1.5 10 5.5" fill="none" stroke="#c3c7cb" stroke-width="2.8"/><path d="M14.5 5.5 L6.5 4.5 L12 13Z" fill="#c3c7cb"/></g>
<g transform="translate(635.0 91.0)"><circle cx="8" cy="8" r="8" fill="#e0202f"/><rect x="3" y="6.5" width="10" height="3" fill="#fff"/></g>
<g transform="translate(666.5 91.0)"><circle cx="8" cy="3" r="2.7" fill="#aaa"/><circle cx="8" cy="13" r="2.7" fill="#999"/></g>
<g transform="translate(699.0 91.0)"><circle cx="8" cy="8" r="7.9" fill="#222"/><path d="M5.3 6 A2.8 2.6 0 1 1 8.8 8.4 Q8 8.8 8 10" fill="none" stroke="#fff" stroke-width="2.1"/><circle cx="8" cy="12.6" r="1.3" fill="#fff"/></g>
<g transform="translate(100.0 120.0)"><rect x="0" y="0" width="13" height="13" fill="#333"/><g fill="#e6e6e6"><rect x="1.5" y="1.5" width="2.5" height="2.5"/><rect x="5.25" y="1.5" width="2.5" height="2.5"/><rect x="9" y="1.5" width="2.5" height="2.5"/><rect x="1.5" y="5.25" width="2.5" height="2.5"/><rect x="5.25" y="5.25" width="2.5" height="2.5"/><rect x="9" y="5.25" width="2.5" height="2.5"/><rect x="1.5" y="9" width="2.5" height="2.5"/><rect x="5.25" y="9" width="2.5" height="2.5"/><rect x="9" y="9" width="2.5" height="2.5"/></g><path d="M10 12 H18 L14 15.5Z" fill="#555e6e"/></g>
<g transform="translate(21.0 49.0)"><path d="M2 1 H11 L13 3 V15 H4 L2 13Z" fill="#f0f0f0" stroke="#999" stroke-width="1.1"/><path d="M5 7 H11 M9 4.5 L11.5 7 L9 9.5" fill="none" stroke="#222" stroke-width="2"/><path d="M10 11 H18 L14 15Z" fill="#555e6e"/></g>
<g transform="translate(49.0 49.0)"><path d="M1 1 H13 L15 3 V15 H1Z" fill="#333"/><rect x="4" y="2.5" width="8" height="4" fill="#e6e6e6"/><rect x="3.5" y="9" width="9" height="6" fill="#999"/><rect x="10" y="10.5" width="2" height="3" fill="#ddd"/></g>
<g transform="translate(19.0 78.0)"><rect x="0" y="0" width="13" height="13" fill="#333"/><g fill="#e6e6e6"><rect x="1.5" y="1.5" width="2.5" height="2.5"/><rect x="5.25" y="1.5" width="2.5" height="2.5"/><rect x="9" y="1.5" width="2.5" height="2.5"/><rect x="1.5" y="5.25" width="2.5" height="2.5"/><rect x="5.25" y="5.25" width="2.5" height="2.5"/><rect x="9" y="5.25" width="2.5" height="2.5"/><rect x="1.5" y="9" width="2.5" height="2.5"/><rect x="5.25" y="9" width="2.5" height="2.5"/><rect x="9" y="9" width="2.5" height="2.5"/></g><path d="M10 12 H18 L14 15.5Z" fill="#555e6e"/></g>
<g transform="translate(61.0 78.0)"><path d="M0 8 Q3.5 -2 7 8 Q10.5 18 14 8" fill="none" stroke="#333" stroke-width="2"/><path d="M7 0 V16" stroke="#aaa" stroke-width="1"/></g></svg>
<!--ICONS END-->
</body></html>
